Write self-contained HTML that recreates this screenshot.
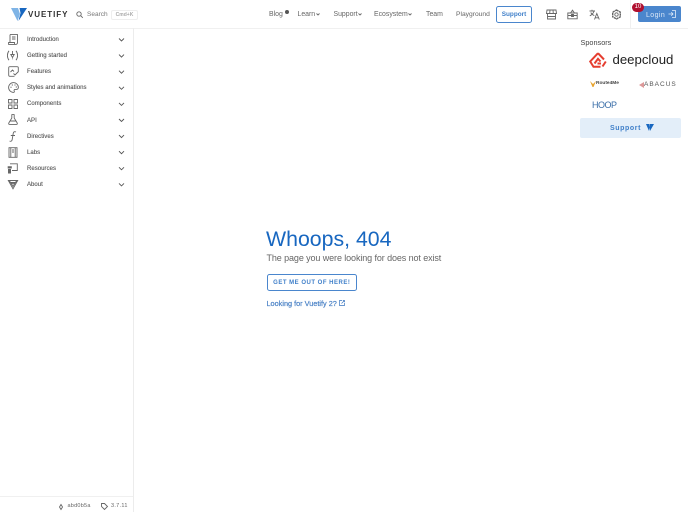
<!DOCTYPE html>
<html lang="en"><head><meta charset="utf-8"><title>Whoops, 404</title>
<style>
html,body{margin:0;padding:0;width:688px;height:512px;overflow:hidden;background:#fff;font-family:"Liberation Sans",sans-serif;color:#444}
.a{position:absolute;white-space:nowrap;line-height:1}
svg{position:absolute;overflow:visible}
.n{font-size:6.900px;color:#666}
.s{font-size:6px;color:#555;left:27px;-webkit-text-stroke:.12px #555;letter-spacing:.04px}
.i{fill:none;stroke:#666;stroke-width:.9}
</style></head><body>
<div class="a" style="left:0;top:28px;width:688px;height:1px;background:#f0f0f0"></div>
<div class="a" style="left:133px;top:28px;width:1px;height:484px;background:#ececec"></div>
<div class="a" style="left:0;top:496px;width:133px;height:1px;background:#f0f0f0"></div>

<svg style="left:11px;top:8px" width="16" height="13" viewBox="0 0 16 13"><path d="M0 0H7L9 6 6.500 13Z" fill="#7fb4e6"/><path d="M16 0H8.500L9.500 5 7.500 13Z" fill="#1867c0"/></svg>
<div class="a" style="left:28px;top:10.500px;font-size:8px;font-weight:700;letter-spacing:.95px;color:#333">VUETIFY</div>
<svg style="left:76px;top:11px" width="7" height="7" viewBox="0 0 7 7"><circle cx="3" cy="3" r="2.200" class="i"/><path d="M4.600 4.600 6.800 6.800" class="i"/></svg>
<div class="a" style="left:87px;top:12px;color:#777;font-size:6.500px">Search</div>
<div class="a" style="left:111px;top:9.500px;width:25px;height:8px;border:1px solid #eee;border-radius:2px;font-size:5px;line-height:9px;text-align:center;color:#aaa;font-weight:700">Cmd+K</div>

<div class="a n" style="left:269px;top:12px">Blog</div>
<div class="a" style="left:284.500px;top:9.500px;width:4px;height:4px;border-radius:50%;background:#555"></div>
<div class="a n" style="left:297.500px;top:12px">Learn</div>
<div class="a n" style="left:333.500px;top:12px">Support</div>
<div class="a n" style="left:374px;top:12px">Ecosystem</div>
<svg style="left:316px;top:13px" width="4" height="3"><path d="M.5.500 2 2 3.500.500" class="i"/></svg>
<svg style="left:358px;top:13px" width="4" height="3"><path d="M.5.500 2 2 3.500.500" class="i"/></svg>
<svg style="left:407.500px;top:13px" width="4" height="3"><path d="M.5.500 2 2 3.500.500" class="i"/></svg>
<div class="a n" style="left:426px;top:12px">Team</div>
<div class="a n" style="left:456px;top:12px;font-size:6.700px">Playground</div>
<div class="a" style="left:496px;top:6px;width:34px;height:15px;border:1px solid #4a86cd;border-radius:2.500px;font-size:6.400px;font-weight:700;line-height:16px;text-align:center;color:#3f7fc9">Support</div>

<svg style="left:546px;top:9px" width="11" height="11" viewBox="0 0 11 11"><path d="M1 1H10L10.500 4.500H.5ZM1.500 4.500V10H9.500V4.500M4 1 3.700 4.500M7 1 7.300 4.500M1.500 7.500H9.500" class="i"/></svg>
<svg style="left:567px;top:9px" width="11" height="11" viewBox="0 0 11 11"><path d="M.8 4H10.200V9.800H.8ZM.8 6.500H10.200M3.500 4 5.500 1.200 7.500 4M4.500 5.500H6.500V7.500H4.500Z" class="i"/></svg>
<svg style="left:589px;top:9px" width="11" height="11" viewBox="0 0 11 11"><path d="M.5 2H6M3 .7V2M5 2C4.500 4 2.500 6 .8 6.800M1.800 3.500C2.500 5 4 6 5.300 6.600M5.500 10.500 7.800 4.500 10.300 10.500M6.300 8.800H9.500" class="i"/></svg>
<svg style="left:611px;top:9px" width="11" height="11" viewBox="0 0 11 11"><path d="M5.500 1 9.300 3.200V7.800L5.500 10 1.700 7.800V3.200Z" fill="none" stroke="#666" stroke-width="1.400" stroke-dasharray="2.300 .5"/><circle cx="5.500" cy="5.500" r="1.700" class="i"/></svg>
<div class="a" style="left:630px;top:0;width:1px;height:28px;background:#f0f0f0"></div>
<div class="a" style="left:638px;top:6px;width:43px;height:16px;background:#4a86cd;border-radius:2px"></div>
<div class="a" style="left:646px;top:11.500px;font-size:7px;letter-spacing:.4px;color:#dce9f7">Login</div>
<svg style="left:668px;top:10px" width="8" height="8" viewBox="0 0 8 8"><path d="M4 .5H7.500V7.500H4M.5 4H5M3.300 2.300 5 4 3.300 5.700" fill="none" stroke="#e3eefa" stroke-width=".8"/></svg>
<div class="a" style="left:632px;top:3px;width:12px;height:9px;background:#b00f2f;border-radius:5px;color:#fff;font-size:6px;line-height:9px;text-align:center">10</div>

<svg style="left:8px;top:34px" width="10" height="11" viewBox="0 0 10 11"><path d="M2 .6H9.500V8.500C9.500 9.800 8.500 10.400 7.500 10.400H.6V8.500H6.500V10M2 .6V8.500M4 3H7.500M4 5H7.500" class="i"/></svg>
<svg style="left:7px;top:50px" width="11" height="11" viewBox="0 0 11 11"><path d="M2 .8C-.1 3.500-.1 7.500 2 10.200M9 .8C11.100 3.500 11.100 7.500 9 10.200" class="i"/><path d="M5.500 1V5M3.800 4.500 5.500 7.500 7.200 4.500ZM5.500 8.500V9.200" class="i" stroke-width="1"/></svg>
<svg style="left:8px;top:66px" width="11" height="11" viewBox="0 0 11 11"><path d="M6.500 10.300H1.800C1 10.300.7 9.800.7 9V1.800C.7 1 1.200.7 1.800.7H9C9.800.7 10.300 1 10.300 1.800V6M5.500 7.500 7 9 10.500 5.500M2.500 6 4.500 4 6 5.500" class="i"/></svg>
<svg style="left:8px;top:82px" width="11" height="11" viewBox="0 0 11 11"><path d="M5.500.6C2.800.6.600 2.800.6 5.500S2.800 10.400 5.500 10.400C6.500 10.400 6.500 9.500 6.200 9 5.800 8.200 6.300 7.400 7.200 7.400H8.500C9.600 7.400 10.400 6.500 10.400 5.300 10.400 2.800 8.200.6 5.500.6Z" class="i"/><circle cx="3" cy="5.200" r=".6" fill="#666"/><circle cx="4.300" cy="3" r=".6" fill="#666"/><circle cx="7" cy="3" r=".6" fill="#666"/><circle cx="8.300" cy="5" r=".6" fill="#666"/></svg>
<svg style="left:8px;top:99px" width="10" height="10" viewBox="0 0 10 10"><path d="M.5.500H4V4H.5ZM6 .5H9.500V4H6ZM.5 6H4V9.500H.5ZM6 6H9.500V9.500H6Z" class="i"/></svg>
<svg style="left:8px;top:114px" width="10" height="11" viewBox="0 0 10 11"><path d="M3.500.6H6.500M3.800.6V4L.8 9C.4 9.800.8 10.400 1.600 10.400H8.400C9.200 10.400 9.600 9.800 9.200 9L6.200 4V.6M2.500 7H7.500" class="i"/></svg>
<svg style="left:9px;top:131px" width="8" height="11" viewBox="0 0 8 11"><path d="M7 1C5.500.2 4.500.8 4.200 2.500L3.200 8.500C2.900 10.200 1.800 10.700.6 10M1.800 4.500H6" class="i"/></svg>
<svg style="left:8px;top:147px" width="10" height="11" viewBox="0 0 10 11"><path d="M1 .7H9V10.300H1ZM2.800.7V10.300M7.200.7V10.300M4 3H6M4 5H6" class="i"/></svg>
<svg style="left:7px;top:163px" width="11" height="11" viewBox="0 0 11 11"><path d="M3 .8H10.300V7.500H5" class="i"/><path d="M.7 3.200H4.800V5.500H.7ZM1 6H4V10.500H1Z" fill="#666"/></svg>
<svg style="left:8px;top:180px" width="10" height="9" viewBox="0 0 10 9"><path d="M.3.500H9.700L5 8.800ZM2.500 2.500H7.500L5 6.500ZM.3.500 5 4 9.700.500" class="i"/></svg>

<div class="a s" style="top:37px">Introduction</div>
<div class="a s" style="top:53.100px">Getting started</div>
<div class="a s" style="top:69.200px">Features</div>
<div class="a s" style="top:85.300px">Styles and animations</div>
<div class="a s" style="top:101.400px">Components</div>
<div class="a s" style="top:117.500px">API</div>
<div class="a s" style="top:133.600px">Directives</div>
<div class="a s" style="top:149.700px">Labs</div>
<div class="a s" style="top:165.800px">Resources</div>
<div class="a s" style="top:182px">About</div>
<svg style="left:118px;top:37px" width="7" height="152" viewBox="0 0 7 152"><path d="M1 1.500 3.500 4 6 1.500M1 17.600 3.500 20.100 6 17.600M1 33.700 3.500 36.200 6 33.700M1 49.800 3.500 52.300 6 49.800M1 65.900 3.500 68.400 6 65.900M1 82 3.500 84.500 6 82M1 98.100 3.500 100.600 6 98.100M1 114.200 3.500 116.700 6 114.200M1 130.300 3.500 132.800 6 130.300M1 146.400 3.500 148.900 6 146.400" fill="none" stroke="#555" stroke-width=".9"/></svg>

<svg style="left:59px;top:503.500px" width="4" height="6" viewBox="0 0 4 6"><path d="M2 .5 3.500 3 2 5.500 .5 3Z" class="i"/></svg>
<div class="a" style="left:67.500px;top:504px;font-size:5.500px;letter-spacing:.25px;color:#666">abd0b5a</div>
<svg style="left:101px;top:503px" width="7" height="7" viewBox="0 0 7 7"><path d="M.5.500H3.500L6.500 3.500 3.500 6.500.5 3.500Z" class="i"/></svg>
<div class="a" style="left:111px;top:504px;font-size:5.500px;letter-spacing:.3px;color:#666">3.7.11</div>

<div class="a" style="left:266px;top:228.500px;font-size:21.300px;color:#1867c0">Whoops, 404</div>
<div class="a" style="left:266.500px;top:254px;font-size:9px;letter-spacing:-.1px;color:#666">The page you were looking for does not exist</div>
<div class="a" style="left:266.500px;top:274px;width:88.500px;height:15px;border:1px solid #4a86cd;border-radius:2.500px;font-size:6px;font-weight:700;letter-spacing:.5px;line-height:16.500px;text-align:center;color:#3f7fc9">GET ME OUT OF HERE!</div>
<div class="a" style="left:266.500px;top:299.500px;font-size:7.300px;color:#4a82c6;-webkit-text-stroke:.2px #4a82c6">Looking for Vuetify 2?</div>
<svg style="left:339px;top:300px" width="6" height="6" viewBox="0 0 6 6"><path d="M3 .5H.5V5.500H5.500V3M2.500 3.500 5.500.5M3.800.5H5.500V2.200" fill="none" stroke="#3a76bf" stroke-width=".7"/></svg>

<div class="a" style="left:580.500px;top:39px;font-size:7.300px;color:#444">Sponsors</div>
<svg style="left:589px;top:52px" width="18" height="16" viewBox="0 0 18 16"><path d="M9 1.200 1.200 9.500 4.500 14.800H11.500M9 1.200 15 7.500M5.500 11.500 9 6.800 11.500 9.500M13.500 14.500 16.800 9.500M8.500 11.500H12" fill="none" stroke="#e53d2f" stroke-width="2"/></svg>
<div class="a" style="left:612.500px;top:53px;font-size:13.200px;color:#222">deepcloud</div>
<svg style="left:589.500px;top:81px" width="6" height="6" viewBox="0 0 6 6"><path d="M0 0 3 3 6 0 3.500 6H2.500Z" fill="#e8a32d"/></svg>
<div class="a" style="left:596px;top:81.500px;font-size:4.800px;font-weight:700;color:#444">Route4Me</div>
<svg style="left:638.500px;top:81.500px" width="5" height="6" viewBox="0 0 5 6"><path d="M0 3 5 0V6Z" fill="#d99"/></svg>
<div class="a" style="left:644px;top:81.500px;font-size:6.500px;letter-spacing:1px;color:#555">ABACUS</div>
<div class="a" style="left:592px;top:101px;font-size:9px;letter-spacing:-.5px;color:#3a6ea8">HOOP</div>
<div class="a" style="left:580px;top:118px;width:101px;height:20px;background:#e3eef9;border-radius:2px"></div>
<div class="a" style="left:610px;top:125px;font-size:7px;font-weight:700;letter-spacing:.6px;color:#3f7fc9">Support</div>
<svg style="left:646px;top:124px" width="8" height="7" viewBox="0 0 8 7"><path d="M0 0H3.500L4 3.500 3 7ZM4 0H8L4 7Z" fill="#1867c0"/></svg>
</body></html>
